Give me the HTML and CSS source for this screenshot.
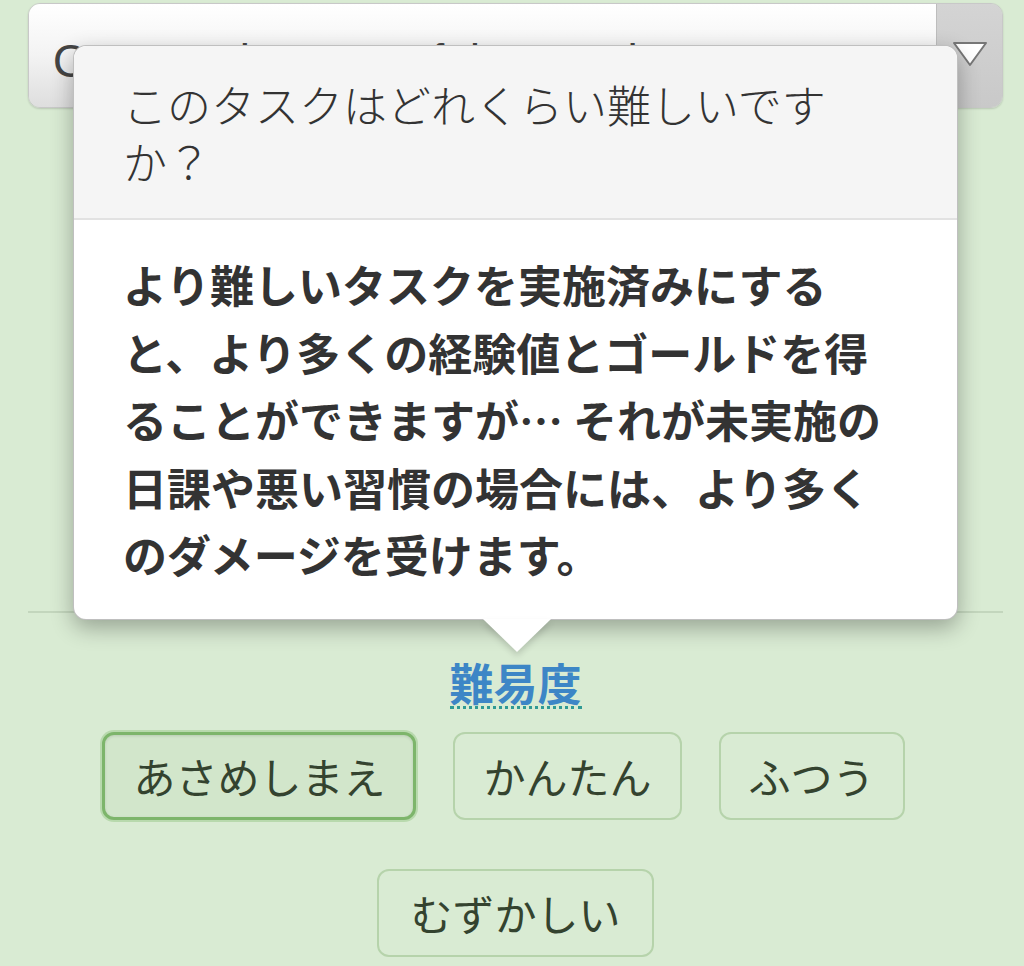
FILE: index.html
```html
<!DOCTYPE html>
<html lang="ja">
<head>
<meta charset="utf-8">
<link rel="stylesheet" href="styles.css">
</head>
<body>
<div class="page">
  <div class="select">
    <div class="select-text">On Certain Days of the Week</div>
    <div class="select-btn">
      <svg width="36" height="28" viewBox="0 0 36 28"><path d="M2 3 L34 3 L18 25 Z" fill="#fff" stroke="#777" stroke-width="2" stroke-linejoin="round"/></svg>
    </div>
  </div>
  <div class="hidden-fields"></div>
  <div class="divider"></div>
  <div class="difficulty">
    <span class="label">難易度</span>
    <div class="options">
      <button class="opt selected">あさめしまえ</button>
      <button class="opt">かんたん</button>
      <button class="opt">ふつう</button>
      <button class="opt">むずかしい</button>
    </div>
  </div>

  <div class="popover">
    <div class="pop-title">このタスクはどれくらい難しいですか？</div>
    <div class="pop-body">より難しいタスクを実施済みにすると、より多くの経験値とゴールドを得ることができますが… それが未実施の日課や悪い習慣の場合には、より多くのダメージを受けます。</div>
    <div class="pop-arrow"></div>
  </div>
</div>
</body>
</html>
```

FILE: styles.css
```css
html, body {
  margin: 0;
  padding: 0;
  background: #d9ebd3;
  font-family: "Noto Sans CJK JP", "Noto Sans", sans-serif;
  color: #333;
}
.page {
  position: relative;
  padding: 3px 21px 0 28px;
  height: 963px;
  overflow: hidden;
}
.select {
  display: flex;
  height: 105px;
  border-radius: 12px;
  overflow: hidden;
  border: 1px solid #c8c8c8;
  box-sizing: border-box;
  box-shadow: 0 1px 2px rgba(0,0,0,0.15);
}
.select-text {
  flex: 1;
  background: linear-gradient(#ffffff, #f3f3f3 50%, #dedede);
  font-family: "Liberation Sans", "Noto Sans", sans-serif;
  font-size: 46px;
  color: #444;
  padding: 30px 0 0 24px;
  white-space: nowrap;
}
.select-btn {
  width: 66px;
  background: linear-gradient(#d4d4d4, #c9c9c9);
  border-left: 1px solid #bdbdbd;
  display: flex;
  justify-content: center;
  padding-top: 36px;
  box-sizing: border-box;
}
.hidden-fields {
  height: 503px;
}
.divider {
  height: 0;
  border-top: 2px solid #c3d6bd;
}
.difficulty {
  display: flex;
  flex-direction: column;
  align-items: center;
  padding-top: 45px;
}
.label {
  font-size: 44px;
  font-weight: 700;
  color: #3d86c6;
  line-height: 48px;
  border-bottom: 3px dotted #2f9a94;
}
.options {
  margin-top: 23px;
  display: flex;
  flex-wrap: wrap;
  justify-content: center;
  column-gap: 37px;
  row-gap: 49px;
  width: 880px;
  padding-right: 24px;
  box-sizing: border-box;
}
.opt {
  height: 88px;
  padding: 0 28px;
  font-family: "Noto Sans CJK JP", "Noto Sans", sans-serif;
  font-size: 42px;
  color: #34432f;
  background: #d9ebd3;
  border: 2px solid #b6d3ab;
  border-radius: 12px;
  line-height: 1;
}
.opt:nth-child(4) { margin-left: 24px; padding: 0 31px; }
.opt.selected {
  background: #d2e6cb;
  border: 3px solid #7db56b;
  box-shadow: 0 0 0 2px #b8d9ad, inset 0 1px 3px rgba(0,0,0,0.12);
}
.popover {
  position: absolute;
  left: 73px;
  top: 45px;
  width: 885px;
  background: #fff;
  border-radius: 13px;
  border: 1px solid rgba(0,0,0,0.25);
  box-sizing: border-box;
  box-shadow: 0 8px 22px rgba(0,0,0,0.3);
}
.pop-title {
  background: #f5f5f5;
  border-bottom: 2px solid #e2e2e2;
  border-radius: 13px 13px 0 0;
  font-size: 44px;
  font-weight: 300;
  line-height: 57px;
  padding: 30px 52px 28px 49px;
  color: #333;
}
.pop-body {
  font-size: 44px;
  font-weight: 700;
  line-height: 67.5px;
  padding: 31px 52px 30px 49px;
  color: #333;
}
.pop-arrow {
  position: absolute;
  left: 409px;
  bottom: -33px;
  width: 0;
  height: 0;
  border-left: 34px solid transparent;
  border-right: 34px solid transparent;
  border-top: 33px solid #fff;
  filter: drop-shadow(0 4px 3px rgba(0,0,0,0.15));
}
```
